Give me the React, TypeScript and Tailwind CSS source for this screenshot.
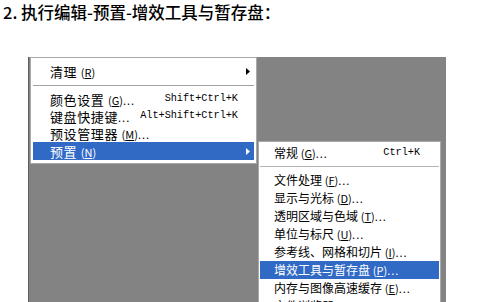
const cjk = "font-['Noto_Sans_CJK_SC','Noto_Sans',sans-serif]";
const mono = "font-['Liberation_Mono','DejaVu_Sans_Mono',monospace]";

function Key({ k }: { k: string }) {
  return (
    <span className="text-[11px] tracking-normal">
      (<span className="underline underline-offset-1">{k}</span>)
    </span>
  );
}

function Arrow({ white }: { white?: boolean }) {
  return (
    <svg width="4" height="7" viewBox="0 0 4 7" className="block">
      <polygon points="0,0 4,3.5 0,7" fill={white ? "#ffffff" : "#000000"} />
    </svg>
  );
}

interface Item {
  label: string;
  k?: string;
  dots?: boolean;
  shortcut?: string;
  sub?: boolean;
  active?: boolean;
}

const mainItems: (Item | "sep")[] = [
  { label: "清理", k: "R", sub: true },
  "sep",
  { label: "颜色设置", k: "G", dots: true, shortcut: "Shift+Ctrl+K" },
  { label: "键盘快捷键", dots: true, shortcut: "Alt+Shift+Ctrl+K" },
  { label: "预设管理器", k: "M", dots: true },
  { label: "预置", k: "N", sub: true, active: true },
];

const subItems: (Item | "sep")[] = [
  { label: "常规", k: "G", dots: true, shortcut: "Ctrl+K" },
  "sep",
  { label: "文件处理", k: "F", dots: true },
  { label: "显示与光标", k: "D", dots: true },
  { label: "透明区域与色域", k: "T", dots: true },
  { label: "单位与标尺", k: "U", dots: true },
  { label: "参考线、网格和切片", k: "I", dots: true },
  { label: "增效工具与暂存盘", k: "P", dots: true, active: true },
  { label: "内存与图像高速缓存", k: "E", dots: true },
  { label: "文件浏览器", k: "B", dots: true },
];

export default function App() {
  return (
    <div className={`w-[500px] h-[302px] overflow-hidden bg-white text-black ${cjk}`}>
      {/* heading */}
      <div className="h-[57px] pl-[3px]">
        <h1 className="text-[16.5px] leading-[24px] font-medium">
          2. 执行编辑-预置-增效工具与暂存盘：
        </h1>
      </div>

      {/* grey workspace with menus */}
      <div className="relative ml-[28px] w-[418px] h-[245px] bg-[#838383] border-l border-[#5e5e5e] overflow-hidden">
        {/* Edit menu (visible part) */}
        <div className="absolute left-[1px] top-0 w-[227px] h-[107px] bg-white border border-[#a9a9a9] px-[2px] pt-[5px]">
          {mainItems.map((it, i) =>
            it === "sep" ? (
              <div key={i} className="h-[11px] flex items-center">
                <div className="h-px w-full bg-[#a3a3a3]" />
              </div>
            ) : (
              <div
                key={i}
                className={`flex items-center pl-[17px] ${it.active ? "h-[18px] bg-[#316ac5] text-white" : "h-[17px]"}`}
              >
                <span className="flex-1 text-[13px] tracking-[0.6px] leading-none whitespace-nowrap">
                  {it.label}
                  {it.k && (
                    <>
                      {" "}
                      <Key k={it.k} />
                    </>
                  )}
                  {it.dots && <span className="text-[11px] tracking-[1px]">...</span>}
                </span>
                {it.shortcut && (
                  <span className={`${mono} text-[10.2px] leading-none whitespace-nowrap`}>{it.shortcut}</span>
                )}
                <span className="w-[16px] pl-[8px]">{it.sub && <Arrow white={it.active} />}</span>
              </div>
            )
          )}
        </div>

        {/* Preferences submenu */}
        <div className="absolute left-[229px] top-[84px] w-[183px] h-[200px] bg-white border border-[#a9a9a9] px-[1px] pt-[2px]">
          {subItems.map((it, i) =>
            it === "sep" ? (
              <div key={i} className="h-[9px] flex items-center">
                <div className="h-px w-full bg-[#b3b3b3]" />
              </div>
            ) : (
              <div
                key={i}
                className={`flex items-center h-[18px] pl-[14px] pr-[19px] ${it.active ? "bg-[#316ac5] text-white" : ""}`}
              >
                <span className="flex-1 text-[12px] leading-none whitespace-nowrap">
                  {it.label}
                  {it.k && (
                    <>
                      {" "}
                      <Key k={it.k} />
                    </>
                  )}
                  {it.dots && <span className="text-[11px] tracking-[1px]">...</span>}
                </span>
                {it.shortcut && (
                  <span className={`${mono} text-[10.2px] leading-none whitespace-nowrap`}>{it.shortcut}</span>
                )}
              </div>
            )
          )}
        </div>
      </div>
    </div>
  );
}
